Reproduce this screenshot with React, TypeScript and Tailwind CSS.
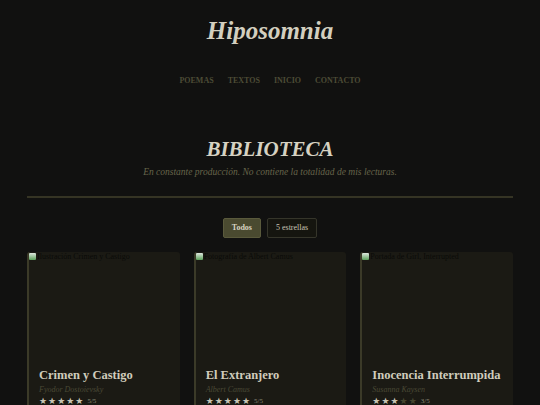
import React from "react";

const books = [
  { alt: "Ilustración Crimen y Castigo", title: "Crimen y Castigo", author: "Fyodor Dostoievsky", stars: 5 },
  { alt: "Fotografía de Albert Camus", title: "El Extranjero", author: "Albert Camus", stars: 5 },
  { alt: "Portada de Girl, Interrupted", title: "Inocencia Interrumpida", author: "Susanna Kaysen", stars: 3 },
];

function BrokenImg({ alt }: { alt: string }) {
  return (
    <div className="flex items-start h-[110px] text-[8px] leading-[10px] text-[#0a0a08]">
      <span className="inline-block w-[7px] h-[7px] mt-[1px] mr-[1px] rounded-[1px] bg-gradient-to-b from-[#dfe8e0] to-[#5aa05a]" />
      <span>{alt}</span>
    </div>
  );
}

export default function App() {
  return (
    <div className="min-h-[405px] bg-[#111110] text-[#d6d2c2]" style={{ fontFamily: '"Liberation Serif", serif' }}>
      <header className="flex flex-col items-center pt-[15px]">
        <h1 className="text-[25px] leading-[32px] italic font-bold text-[#d3cfbf]">
          Hiposomnia
        </h1>
        <nav className="flex gap-[14px] mt-[28px] text-[8px] leading-[12px] font-bold uppercase text-[#4d4c36]">
          <span>Poemas</span>
          <span>Textos</span>
          <span>Inicio</span>
          <span>Contacto</span>
        </nav>
      </header>

      <section className="flex flex-col items-center mt-[50px] px-[27px]">
        <h2 className="text-[21px] leading-[24px] italic font-bold text-[#d6d2c2]">
          BIBLIOTECA
        </h2>
        <p className="mt-[5px] text-[9.5px] leading-[13px] italic text-[#67654b]">
          En constante producción. No contiene la totalidad de mis lecturas.
        </p>
        <div className="w-full h-[2px] bg-[#353424] mt-[17px]" />
        <div className="flex gap-[6px] mt-[20px]">
          <button className="h-[20px] px-[8px] text-[8px] font-bold bg-[#4a4a30] border border-[#5a5a3c] rounded-[2px] text-[#d6d2c2]">Todos</button>
          <button className="h-[20px] px-[8px] text-[8px] bg-[#15150f] border border-[#35352a] rounded-[2px] text-[#c8c4b4]">5 estrellas</button>
        </div>
        <div className="grid grid-cols-3 gap-[14px] w-full mt-[14px]">
          {books.map((b) => (
            <div key={b.title} className="bg-[#1b1a14] border-l-2 border-[#3b3a28] rounded-[3px] h-[160px] flex flex-col">
              <BrokenImg alt={b.alt} />
              <div className="px-[10px] pt-[5px]">
                <h3 className="text-[12.5px] leading-[16px] font-bold whitespace-nowrap text-[#d0ccbc]">{b.title}</h3>
                <p className="mt-[2px] text-[8px] leading-[10px] italic text-[#4a4934]">{b.author}</p>
                <div className="flex items-center mt-[1px] text-[9px] leading-[10px]">
                  {[0, 1, 2, 3, 4].map((i) => (
                    <span key={i} className={i < b.stars ? "text-[#c8c4b4] mr-[1px]" : "text-[#45452f] mr-[1px]"} style={{ fontFamily: '"DejaVu Sans", sans-serif' }}>★</span>
                  ))}
                  <span className="ml-[3px] text-[7px] text-[#8a8776]">{b.stars}/5</span>
                </div>
              </div>
            </div>
          ))}
        </div>
      </section>
    </div>
  );
}
